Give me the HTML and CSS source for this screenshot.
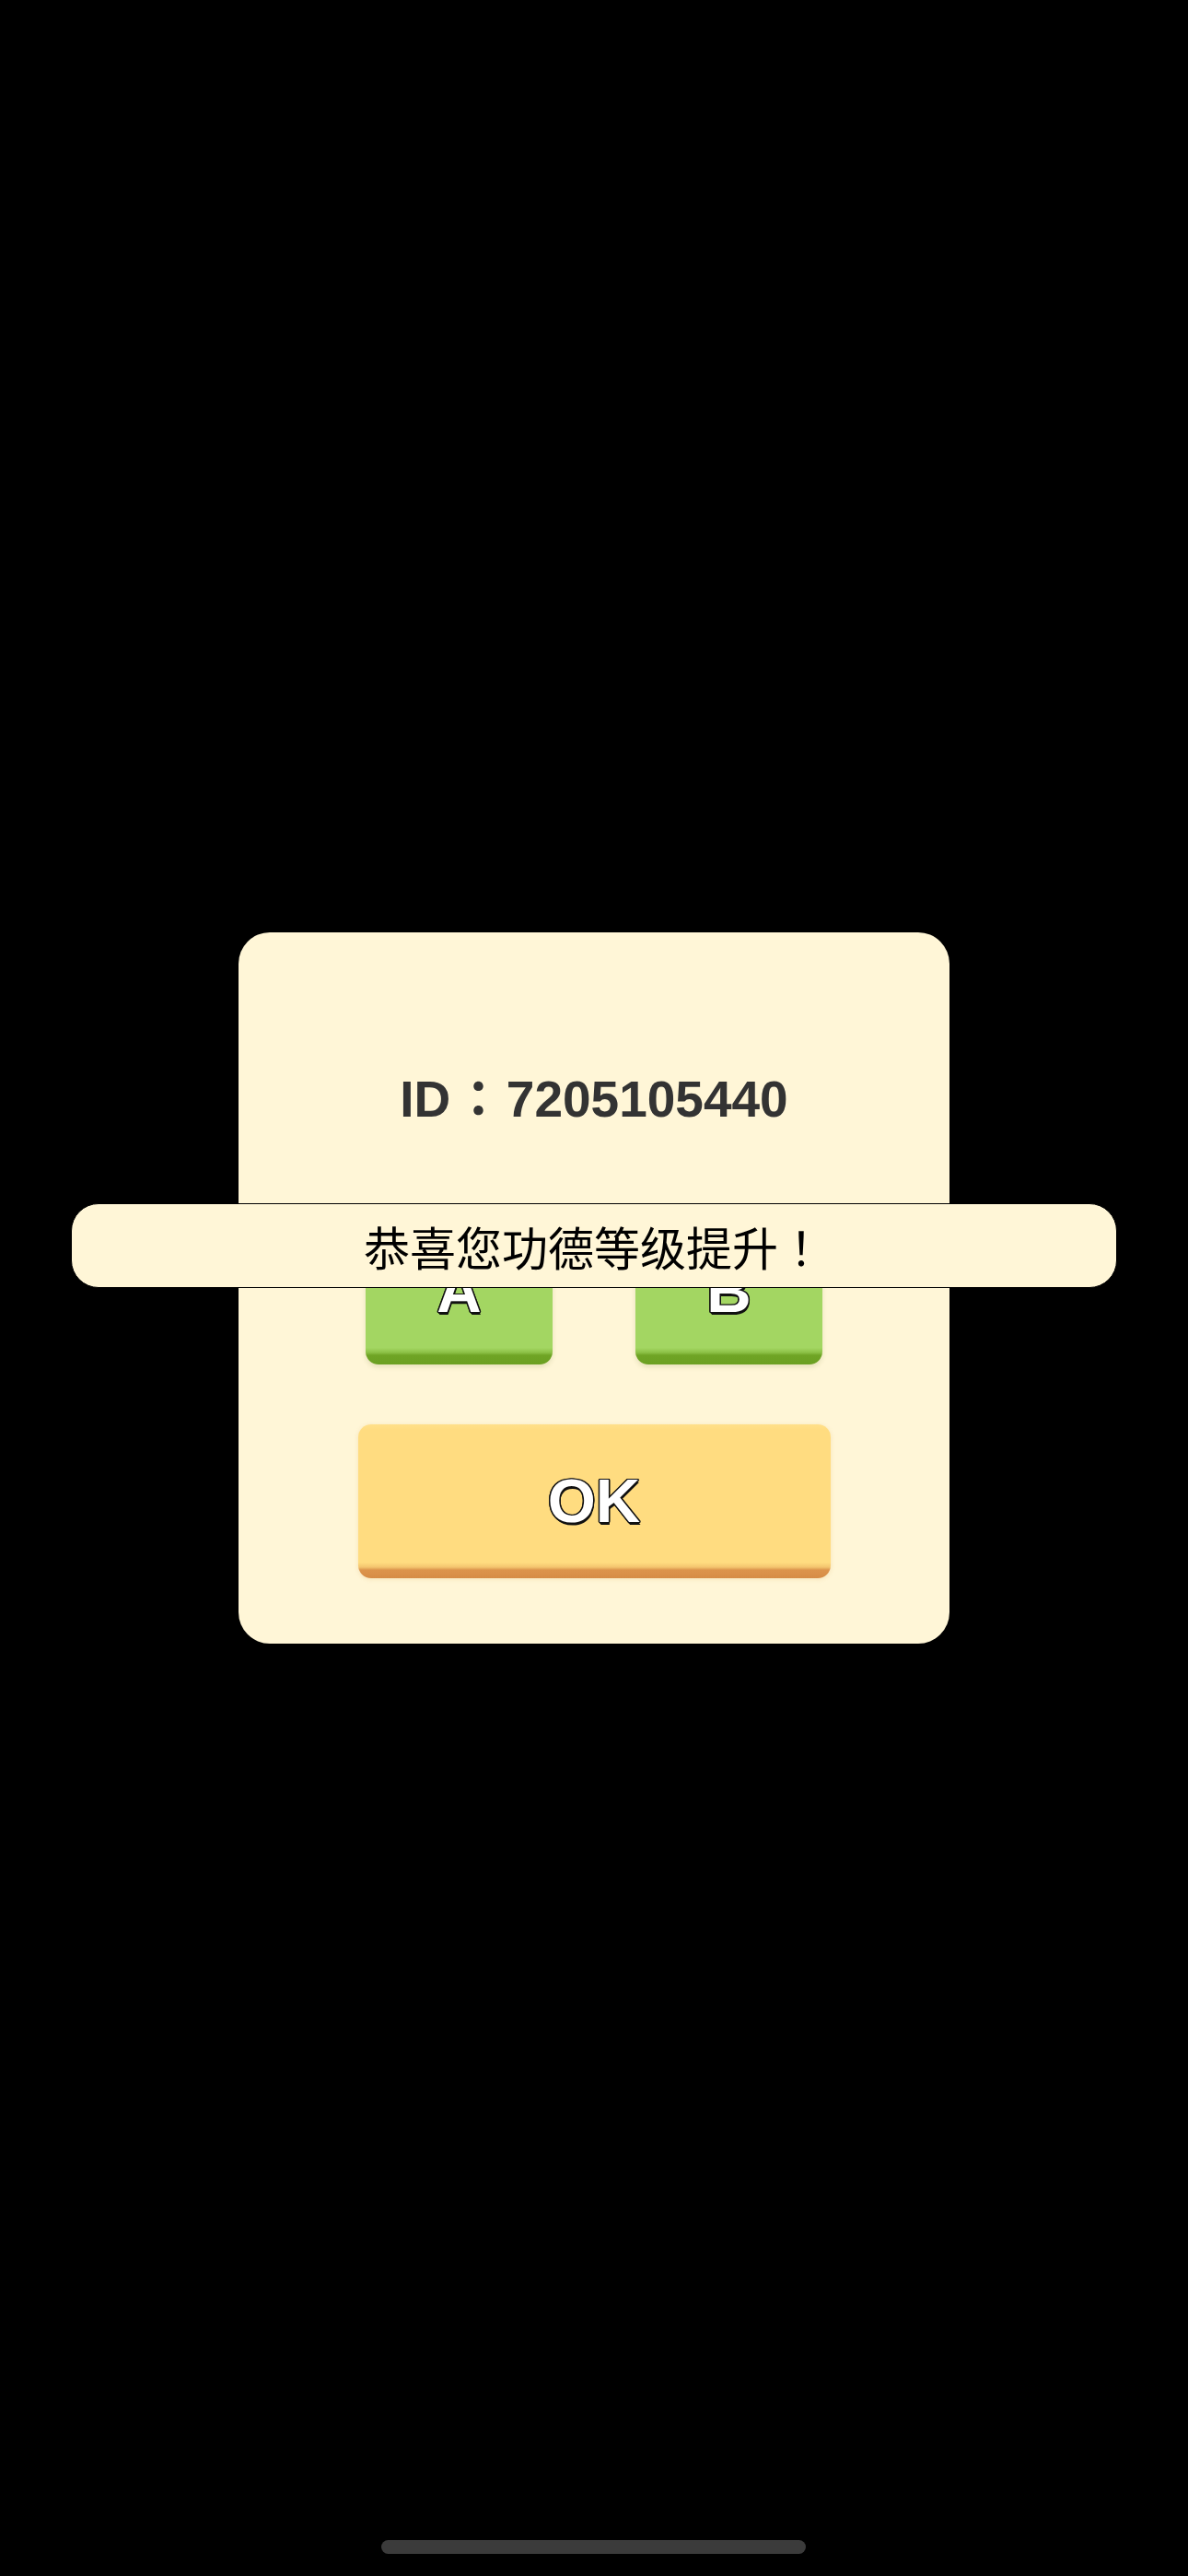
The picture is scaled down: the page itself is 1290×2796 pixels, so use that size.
FILE: index.html
```html
<!DOCTYPE html>
<html lang="zh-CN">
<head>
<meta charset="utf-8">
<title>ID</title>
<link rel="stylesheet" href="styles.css">
</head>
<body>
<main class="screen">
  <section class="dialog">
    <div class="dialog-id">ID<span class="fw fw-box">：</span>7205105440</div>
    <div class="choice-row">
      <button class="btn btn-green"><span class="btn-label">A</span></button>
      <button class="btn btn-green"><span class="btn-label">B</span></button>
    </div>
    <button class="btn btn-ok"><span class="btn-label">OK</span></button>
  </section>
  <div class="toast">恭喜您功德等级提升<span class="fw">！</span></div>
  <div class="home-indicator"></div>
</main>
</body>
</html>
```
FILE: styles.css
```css
html, body {
  margin: 0;
  padding: 0;
  background: #000;
}

.screen {
  position: relative;
  width: 1290px;
  height: 2796px;
  display: flex;
  align-items: center;
  justify-content: center;
  background: #000;
  overflow: hidden;
  text-spacing-trim: space-all;
}

.fw {
  font-family: "Noto Sans CJK TC", "Noto Sans CJK JP", sans-serif;
  text-spacing-trim: space-all;
  line-height: 0;
}

.fw-box {
  display: inline-block;
  width: 1.1em;
  text-align: center;
}

.dialog {
  box-sizing: border-box;
  width: 772px;
  height: 772px;
  padding: 154px 0 71px;
  background: #fff6d7;
  border-radius: 34px;
  display: flex;
  flex-direction: column;
  align-items: center;
}

.dialog-id {
  font-family: "Liberation Sans", "Noto Sans CJK TC", sans-serif;
  font-weight: 700;
  font-size: 55px;
  line-height: 54px;
  height: 54px;
  color: #333333;
  white-space: nowrap;
}

.choice-row {
  display: flex;
  gap: 90px;
  margin-top: 111px;
}

.btn {
  border: none;
  padding: 0;
  margin: 0;
  cursor: pointer;
  display: flex;
  align-items: center;
  justify-content: center;
  box-sizing: border-box;
  border-radius: 14px;
}

.btn-label {
  font-family: "Liberation Sans", Arial, sans-serif;
  font-weight: 700;
  font-size: 67px;
  line-height: 1;
  color: #ffffff;
  text-shadow:
    -1.5px 0 0 #111, 1.5px 0 0 #111, 0 -1.5px 0 #111, 0 1.5px 0 #111,
    -1.2px -1.2px 0 #111, 1.2px -1.2px 0 #111, -1.2px 1.2px 0 #111, 1.2px 1.2px 0 #111,
    1px 2.5px 0 #111;
}

.btn-green {
  width: 203px;
  height: 150px;
  padding-bottom: 12px;
  background: linear-gradient(to bottom,
    #a3d662 0,
    #a3d662 calc(100% - 18px),
    #8cc146 calc(100% - 13px),
    #6fa425 calc(100% - 10px),
    #6a9f22 100%);
  box-shadow: 0 3px 5px rgba(90, 110, 30, 0.15);
}

.btn-ok {
  width: 513px;
  height: 167px;
  margin-top: 65px;
  padding-top: 4px;
  padding-bottom: 6px;
  background: linear-gradient(to bottom,
    #ffe08a 0,
    #ffdc80 6px,
    #ffdc80 calc(100% - 17px),
    #f3c46e calc(100% - 12px),
    #dc944c calc(100% - 9px),
    #d68c46 100%);
  box-shadow: 0 1px 5px rgba(200, 140, 40, 0.18);
}

.toast {
  position: absolute;
  top: 1306px;
  left: 77px;
  right: 77px;
  box-sizing: border-box;
  height: 92px;
  border: 1px solid #000;
  border-radius: 30px;
  background: #fff6d7;
  display: flex;
  align-items: center;
  justify-content: center;
  font-family: "Noto Sans CJK SC", sans-serif;
  font-size: 50px;
  font-weight: 400;
  line-height: 1.2;
  color: #000;
  white-space: nowrap;
}

.home-indicator {
  position: absolute;
  left: 414px;
  bottom: 24px;
  width: 461px;
  height: 15px;
  border-radius: 8px;
  background: #3b3b3b;
}
```
